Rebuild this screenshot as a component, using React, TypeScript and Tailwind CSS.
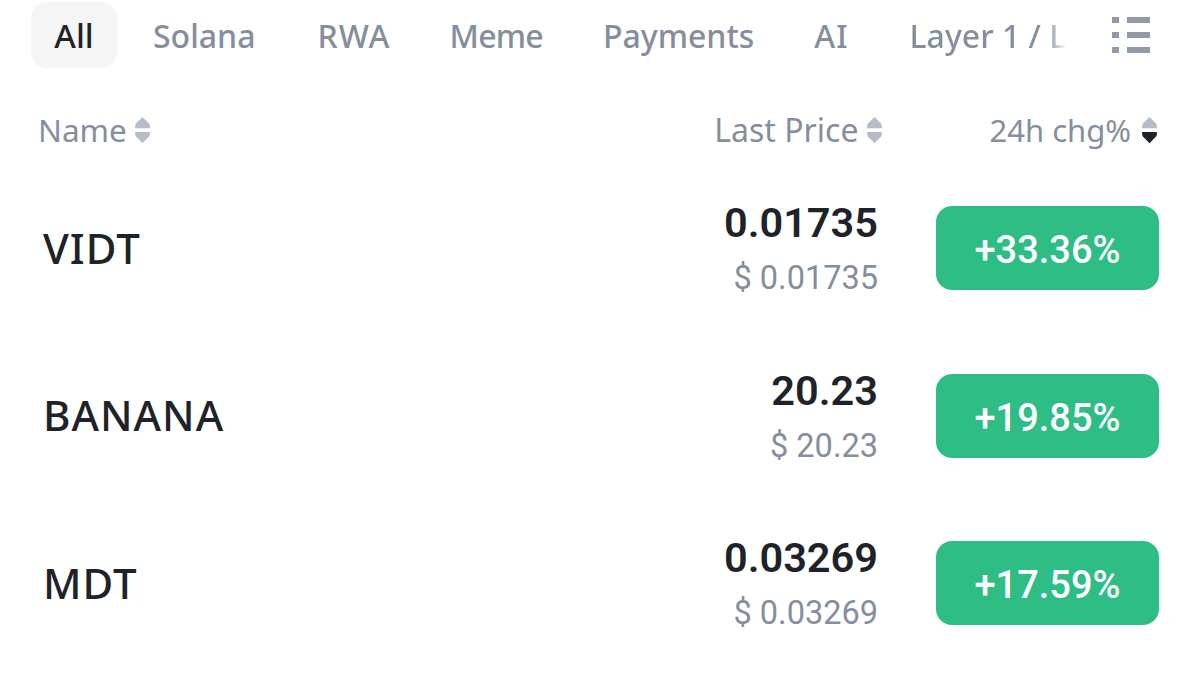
const tabs = [
  { label: "Solana", cls: "" },
  { label: "RWA", cls: "ml-[2px] tracking-[1px]" },
  { label: "Meme", cls: "-ml-[1px] tracking-[-0.75px]" },
  { label: "Payments", cls: "" },
  { label: "AI", cls: "tracking-[1px]" },
];

const rows = [
  { name: "VIDT", price: "0.01735", usd: "$ 0.01735", chg: "+33.36%" },
  { name: "BANANA", price: "20.23", usd: "$ 20.23", chg: "+19.85%" },
  { name: "MDT", price: "0.03269", usd: "$ 0.03269", chg: "+17.59%" },
];

const SortIcon = ({ active = false }: { active?: boolean }) => (
  <svg width="15" height="28" viewBox="0 0 16 28" className="shrink-0">
    <path d="M8 0 L15 7 Q16 8.5 16 12 L0 12 Q0 8.5 1 7 Z" fill="#b7bdc6" />
    <path
      d="M0 16 L16 16 Q16 19.5 15 21 L8 28 L1 21 Q0 19.5 0 16 Z"
      fill={active ? "#1e2329" : "#b7bdc6"}
    />
  </svg>
);

const ListIcon = () => (
  <svg width="38" height="36" viewBox="0 0 38 36" fill="#929aa5">
    <rect x="0" y="0" width="7" height="6" />
    <rect x="15" y="0" width="23" height="6" />
    <rect x="0" y="15" width="7" height="6" />
    <rect x="15" y="15" width="23" height="6" />
    <rect x="0" y="30" width="7" height="6" />
    <rect x="15" y="30" width="23" height="6" />
  </svg>
);

export default function App() {
  return (
    <div className="w-[1200px] h-[674px] bg-white overflow-hidden font-['Noto_Sans','Liberation_Sans',sans-serif]">
      <div className="flex items-center h-[66px] mt-[2px] pl-[31px] pr-[50px]">
        <div className="flex items-center justify-center w-[86px] h-[66px] pt-[2px] rounded-[16px] bg-[#f5f5f5] text-[#1e2329] text-[33px] font-medium">
          All
        </div>
        <div className="flex items-center gap-[60px] ml-[36px] pt-[2px] text-[32px] text-[#848e9c] font-medium">
          {tabs.map((t) => (
            <span key={t.label} className={t.cls}>
              {t.label}
            </span>
          ))}
        </div>
        <div className="ml-[61px] mt-[2px] whitespace-nowrap text-[32px] text-[#848e9c] font-medium bg-gradient-to-r from-[#848e9c] from-[88%] to-transparent bg-clip-text [-webkit-text-fill-color:transparent]">
          Layer 1 / L
        </div>
        <div className="ml-auto">
          <ListIcon />
        </div>
      </div>

      <div className="flex items-center mt-[47px] h-[30px] pl-[38px] pr-[43px] text-[32px] text-[#848e9c]">
        <span className="text-[31.5px]">Name</span>
        <span className="ml-[8px]">
          <SortIcon />
        </span>
        <span className="ml-auto">Last Price</span>
        <span className="ml-[9px]">
          <SortIcon />
        </span>
        <span className="ml-[107px] text-[31px]">24h chg%</span>
        <span className="ml-[11px]">
          <SortIcon active />
        </span>
      </div>

      <div className="flex flex-col gap-[83.5px] mt-[61px] pl-[43px] pr-[41px]">
        {rows.map((r) => (
          <div key={r.name} className="flex items-center h-[84px]">
            <span className="pb-[2px] text-[42px] tracking-[1px] font-medium text-[#1e2329]">{r.name}</span>
            <div className="ml-auto mt-[4px] flex flex-col items-end font-['Roboto',sans-serif]">
              <span className="text-[41.5px] leading-[57px] font-semibold text-[#1e2329]">{r.price}</span>
              <span className="text-[32.5px] leading-[55px] text-[#848e9c]">{r.usd}</span>
            </div>
            <div className="ml-[58px] flex items-center justify-center w-[223px] h-[84px] pt-[5px] rounded-[16px] bg-[#2ebd85] text-white text-[38px] font-medium font-['Roboto',sans-serif]">
              {r.chg}
            </div>
          </div>
        ))}
      </div>
    </div>
  );
}
